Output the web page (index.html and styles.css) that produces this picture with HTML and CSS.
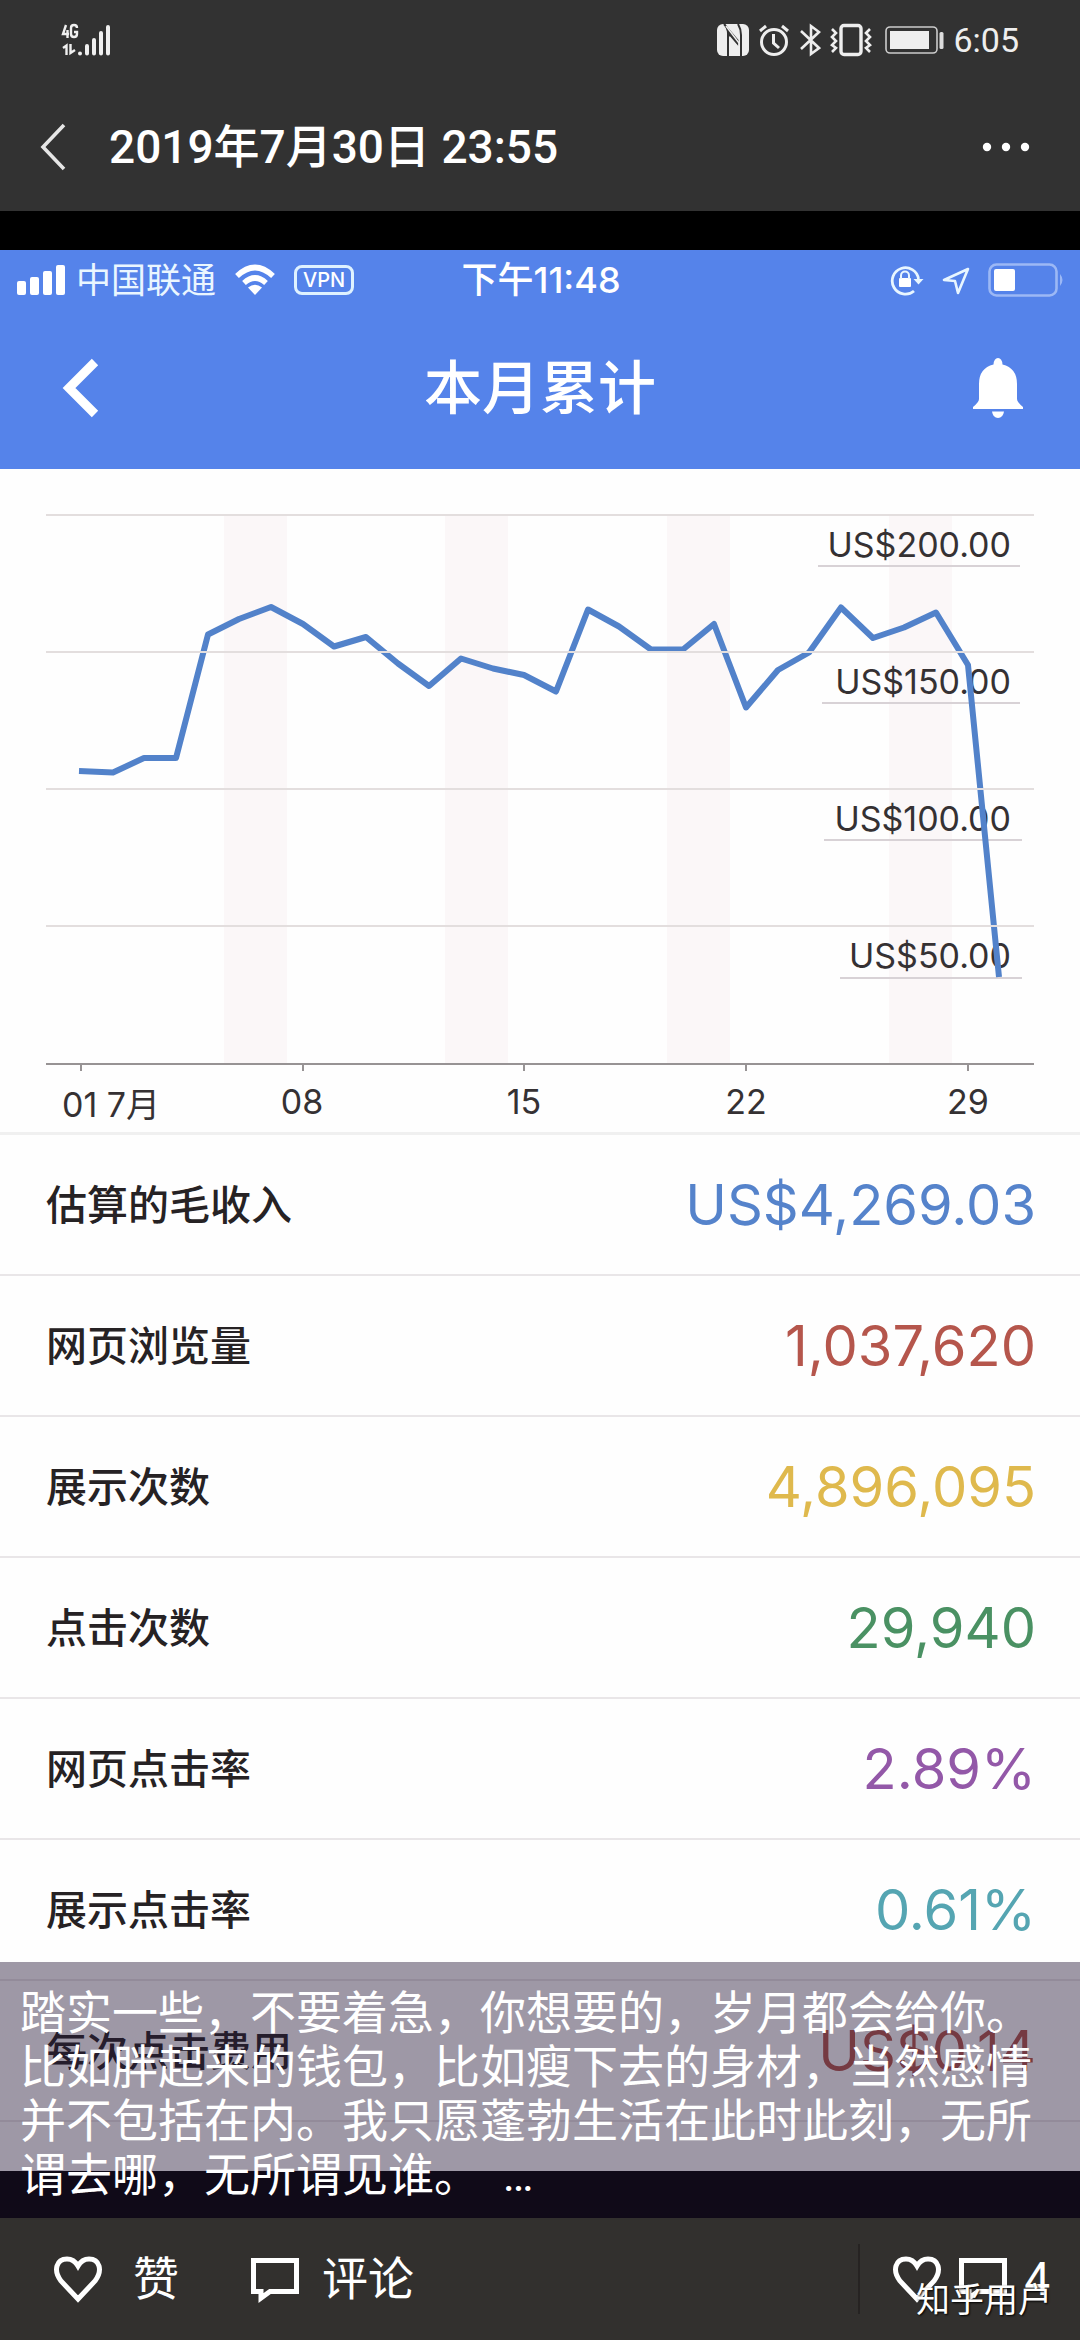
FILE: index.html
```html
<!DOCTYPE html>
<html lang="zh-CN">
<head>
<meta charset="utf-8">
<meta name="viewport" content="width=device-width, initial-scale=1">
<title>2019年7月30日 23:55</title>
<link rel="stylesheet" href="styles.css">
</head>
<body>
<div class="viewer">
  <header class="top">
    <div class="phone-status">
      <svg class="network" width="54" height="36" viewBox="0 0 54 36" fill="none" stroke="#f0f0f0" role="img" aria-label="4G">
        <g stroke-width="2.4"><path d="M6 3L3 12H9M7.500 8V16"/><path d="M17 6Q17 3 14 3T11 6V12Q11 15 14 15T17 12V10H14"/><path d="M3 26L6.500 23.500V33M10.500 22V31L15 28"/></g>
        <g stroke-width="4" stroke-linecap="round"><path d="M20 31.500V31.500M27 24V31.500M34 18V31.500M41 11V31.500M48 5V31.500"/></g>
      </svg>
      <div class="status-icons">
        <svg width="32" height="34" viewBox="0 0 32 34" role="img" aria-label="NFC">
          <rect y="1" width="32" height="32" rx="6" fill="#eee"/>
          <path d="M7 1Q11 5 11 10V33M21 1Q24 6 24 12V33" fill="none" stroke="#323232" stroke-width="2"/>
          <path d="M8 1L21.500 17V24L12 13V33H10V8Z" fill="#323232"/>
          <path d="M9 3L22 20V31L13.500 21V15L22 25" fill="none" stroke="#eee" stroke-width="1.500"/>
        </svg>
        <svg width="32" height="34" viewBox="0 0 32 34" fill="none" stroke="#eee" stroke-width="3" role="img" aria-label="闹钟">
          <circle cx="16" cy="19" r="12.500"/><path d="M15.500 11V20L21 25M2 8L8 3M30 8L24 3"/>
        </svg>
        <svg width="22" height="34" viewBox="0 0 22 34" fill="none" stroke="#eee" stroke-width="2.600" role="img" aria-label="蓝牙">
          <path d="M2 8L20 25L12 31V3L20 9L2 26"/>
        </svg>
        <svg width="42" height="34" viewBox="0 0 42 34" fill="none" stroke="#eee" stroke-width="3" role="img" aria-label="振动">
          <rect x="11" y="2.500" width="20" height="29" rx="3" stroke-width="3.400"/><path stroke-width="2.600" d="M2 6L6 10L2 14L6 18L2 22L6 25L2 29M40 6L36 10L40 14L36 18L40 22L36 25L40 29"/>
        </svg>
        <svg class="phone-battery" width="60" height="34" viewBox="0 0 60 34" role="img" aria-label="电量">
          <rect x="1" y="4" width="51" height="26" rx="4" fill="none" stroke="#ccc" stroke-width="1.600"/><rect x="5" y="8" width="39" height="18" fill="#eee"/><rect x="54.500" y="9" width="4" height="17" rx="1.500" fill="#ddd"/>
        </svg>
        <span class="clock">6:05</span>
      </div>
    </div>
    <div class="title-bar">
      <button class="plain back" aria-label="返回">
        <svg width="28" height="50" viewBox="0 0 28 50" fill="none" stroke="#e6e6e6" stroke-width="3.600"><path d="M25 3L4 25L25 47"/></svg>
      </button>
      <h1>2019年7月30日 23:55</h1>
      <button class="plain more" aria-label="更多">
        <svg width="48" height="10" viewBox="0 0 48 10" fill="#fff"><circle cx="5" cy="5" r="4.200"/><circle cx="24" cy="5" r="4.200"/><circle cx="43" cy="5" r="4.200"/></svg>
      </button>
    </div>
  </header>

  <main class="stage">
    <section class="report">
      <header class="app-head">
        <div class="app-status">
          <div class="carrier">
            <svg width="50" height="32" viewBox="0 0 50 32" fill="#fff" role="img" aria-label="信号"><rect x="1" y="17" width="9" height="14" rx="2"/><rect x="14" y="13" width="9" height="18" rx="2"/><rect x="27" y="7" width="9" height="24" rx="2"/><rect x="40" y="1" width="9" height="30" rx="2"/></svg>
            <span class="carrier-name">中国联通</span>
            <svg width="42" height="32" viewBox="0 0 42 32" role="img" aria-label="无线网络"><path d="M3 12Q21 -5 39 12M10 19Q21 9 32 19" fill="none" stroke="#fff" stroke-width="5.500"/><path d="M14 23.500Q21 18 28 23.500L21 31Z" fill="#fff"/></svg>
            <span class="vpn">VPN</span>
          </div>
          <span class="app-clock">下午11:48</span>
          <div class="app-icons">
            <svg width="34" height="32" viewBox="0 0 34 32" fill="none" stroke="#e8f6ff" role="img" aria-label="方向锁定"><path d="M24 27A13.200 13.200 0 1 1 28.500 15" stroke-width="2.800"/><path d="M23.500 15H33.500L28.500 20.500Z" fill="#e8f6ff" stroke="none"/><rect x="9" y="14" width="12" height="9" rx="1" fill="#fff" stroke="none"/><path d="M11 15V11.500A4 4 0 0 1 19 11.500V15" stroke-width="2"/></svg>
            <svg width="30" height="32" viewBox="0 0 30 32" fill="none" stroke="#e8f6ff" stroke-width="2.600" stroke-linejoin="round" role="img" aria-label="定位"><path d="M27 5L3 16L14 17L17 29Z"/></svg>
            <svg width="78" height="36" viewBox="0 0 78 36" role="img" aria-label="电池"><rect x="1.500" y="2.500" width="67" height="31" rx="7" fill="none" stroke="#9cb8f5" stroke-width="2.600"/><rect x="6" y="7" width="21" height="22" rx="2" fill="#fff"/><path d="M72 12Q77 18 72 24Z" fill="#9cb8f5"/></svg>
          </div>
        </div>
        <div class="app-title">
          <button class="plain app-back" aria-label="返回">
            <svg width="38" height="60" viewBox="0 0 38 60" fill="none" stroke="#fff" stroke-width="9"><path d="M33 4L7 30L33 56"/></svg>
          </button>
          <h2>本月累计</h2>
          <button class="plain app-bell" aria-label="通知">
            <svg width="52" height="62" viewBox="0 0 52 62" fill="#fff"><path d="M21.500 7.500Q22 1 26 1T30.500 7.500Q45 11 45 27V42Q45 45 51 50V52H1V50Q7 45 7 42V27Q7 11 21.500 7.500Z"/><path d="M20 54.500H32Q31 61 26 61T20 54.500Z"/></svg>
          </button>
        </div>
      </header>

      <div class="chart">
        <svg viewBox="0 0 1080 663" role="img" aria-label="本月每日收入">
          <g class="band"><rect x="224" y="46" width="63" height="549"/><rect x="445" y="46" width="63" height="549"/><rect x="667" y="46" width="63" height="549"/><rect x="889" y="46" width="63" height="549"/></g>
          <path class="rule" d="M46 46H1034"/>
          <g class="label" text-anchor="end"><text x="1011" y="88">US$200.00</text><text x="1011" y="225">US$150.00</text><text x="1011" y="362">US$100.00</text><text x="1011" y="499">US$50.00</text></g>
          <path class="underline" d="M818 97H1020M822 234H1020M824 371H1022M840 509H1022"/>
          <polyline class="trend" points="79,302 113,303.500 144,289 176,289 208,165.500 239,150 271,138 303,155 334,177.500 366,168 398,194.500 429,217 461,189.500 493,199.500 524,206 556,222.500 588,140.500 619,157.500 651,180.500 683,180.500 714,155 746,238.500 778,201 809,183.500 841,138.500 873,169 904,158.500 936,143.500 968,196 999,508"/>
          <path class="rule" d="M46 183H1034M46 320H1034M46 457H1034"/>
          <path class="axis" d="M46 595H1034M81 595V602M303 595V602M524 595V602M746 595V602M968 595V602"/>
          <g class="label"><text x="62" y="648">01 7月</text><g text-anchor="middle"><text x="302" y="645">08</text><text x="524" y="645">15</text><text x="746" y="645">22</text><text x="968" y="645">29</text></g></g>
        </svg>
      </div>

      <table class="metrics">
        <tbody>
          <tr><th scope="row">估算的毛收入</th><td class="blue">US$4,269.03</td></tr>
          <tr><th scope="row">网页浏览量</th><td class="red">1,037,620</td></tr>
          <tr><th scope="row">展示次数</th><td class="yellow">4,896,095</td></tr>
          <tr><th scope="row">点击次数</th><td class="green">29,940</td></tr>
          <tr><th scope="row">网页点击率</th><td class="purple">2.89%</td></tr>
          <tr><th scope="row">展示点击率</th><td class="teal">0.61%</td></tr>
          <tr><th scope="row">每次点击费用</th><td class="red">US$0.14</td></tr>
        </tbody>
      </table>
    </section>
    <p class="caption">踏实一些，不要着急，你想要的，岁月都会给你。比如胖起来的钱包，比如瘦下去的身材，当然感情并不包括在内。我只愿蓬勃生活在此时此刻，无所谓去哪，无所谓见谁。&nbsp; …</p>
  </main>

  <footer class="actions">
    <button class="plain action like">
      <svg width="50" height="48" viewBox="0 0 50 48"><path class="outline" d="M25 44L8 26Q2 18 4 11Q6 4 14 4Q21 4 25 11Q29 4 36 4Q44 4 46 11Q48 18 42 26Z"/></svg>
      <span>赞</span>
    </button>
    <button class="plain action comment">
      <svg width="50" height="48" viewBox="0 0 50 48"><path class="outline" d="M3.500 5.500H46.500V36.500H20L11 43V36.500H3.500Z"/></svg>
      <span>评论</span>
    </button>
    <button class="plain action detail" aria-label="查看详情">
      <svg width="50" height="48" viewBox="0 0 50 48"><path class="outline" d="M25 44L8 26Q2 18 4 11Q6 4 14 4Q21 4 25 11Q29 4 36 4Q44 4 46 11Q48 18 42 26Z"/></svg>
      <svg width="50" height="48" viewBox="0 0 50 48"><path class="outline" d="M3.500 5.500H46.500V36.500H20L11 43V36.500H3.500Z"/></svg>
      <span>4</span>
    </button>
    <span class="watermark">知乎用户</span>
  </footer>
</div>
</body>
</html>
```

FILE: styles.css
```css
* {
  box-sizing: border-box;
}

body {
  margin: 0;
  background: #32302e;
  color: #fff;
  font-family: Roboto, "Noto Sans CJK SC", sans-serif;
}

svg {
  display: block;
  flex: none;
}

h1,
h2,
p {
  margin: 0;
}

.plain {
  display: flex;
  align-items: center;
  padding: 0;
  border: 0;
  background: none;
  color: inherit;
  font: inherit;
}

.viewer {
  display: flex;
  flex-direction: column;
  min-height: 100vh;
}

/* Phone status bar and title */

.top {
  background: #323232;
}

.phone-status {
  display: flex;
  justify-content: space-between;
  align-items: center;
  height: 84px;
  padding: 0 61px 4px 60px;
}

.status-icons {
  display: flex;
  align-items: center;
  gap: 9px;
}

.phone-battery {
  margin-left: 4px;
}

.clock {
  margin-left: -1px;
  color: #eee;
  font-size: 34px;
  line-height: 40px;
}

.title-bar {
  display: flex;
  align-items: center;
  height: 127px;
  padding: 0 50px 2px 39px;
}

.title-bar h1 {
  flex: 1;
  margin-left: 42px;
  font-size: 46px;
  line-height: 64px;
  font-weight: 500;
}

/* Photo area */

.stage {
  position: relative;
  padding: 39px 0 47px;
  background: #000;
}

.report {
  padding-bottom: 49px;
  background: #fefefe;
  color: #262224;
  font-family: Inter, "Noto Sans CJK SC", sans-serif;
}

.app-head {
  height: 219px;
  background: #5583ea;
  color: #fff;
}

.app-status {
  display: grid;
  grid-template-columns: 1fr auto 1fr;
  align-items: center;
  height: 60px;
  padding: 0 14px 0 16px;
}

.carrier,
.app-icons {
  display: flex;
  align-items: center;
}

.carrier-name {
  margin: 0 18px 0 10px;
  color: #eaf6ff;
  font-size: 35px;
  line-height: 40px;
}

.vpn {
  margin-left: 18px;
  padding: 0 6px;
  border: 3px solid #dff2ff;
  border-radius: 8px;
  font-size: 20px;
  line-height: 24px;
  font-weight: 500;
}

.app-clock {
  font-size: 36px;
  line-height: 40px;
  font-weight: 500;
}

.app-icons {
  justify-content: flex-end;
  gap: 17px;
}

.app-title {
  display: grid;
  grid-template-columns: 1fr auto 1fr;
  align-items: center;
  height: 156px;
  padding: 0 56px;
}

.app-title h2 {
  font-size: 58px;
  line-height: 80px;
  font-weight: 500;
}

.app-back {
  margin-left: 6px;
}

.app-bell {
  justify-self: end;
}

/* Daily revenue chart */

.chart {
  border-bottom: 3px solid #f0f0f0;
}

.chart svg {
  width: 100%;
  height: auto;
}

.band {
  fill: #fbf7f8;
}

.rule {
  fill: none;
  stroke: #e3dede;
  stroke-width: 2;
}

.underline {
  fill: none;
  stroke: #d8d2d6;
  stroke-width: 2;
}

.axis {
  fill: none;
  stroke: #979394;
  stroke-width: 2;
}

.trend {
  fill: none;
  stroke: #5282ca;
  stroke-width: 6;
  stroke-linejoin: round;
}

.label {
  fill: #353133;
  font-size: 34px;
}

/* Totals */

.metrics {
  width: 100%;
  border-spacing: 0;
}

.metrics th,
.metrics td {
  height: 141px;
  padding: 0 44px 0 46px;
  border-bottom: 2px solid #e9e6e8;
}

.metrics th {
  font-size: 41px;
  line-height: 60px;
  font-weight: 500;
  text-align: left;
}

.metrics td {
  font-size: 56px;
  line-height: 68px;
  text-align: right;
}

.blue { color: #5583cb; }
.red { color: #b5564c; }
.yellow { color: #dfb94d; }
.green { color: #4a9163; }
.purple { color: #9358a8; }
.teal { color: #55a5b2; }

.caption {
  position: absolute;
  right: 0;
  bottom: 0;
  left: 0;
  padding: 24px 20px 16px;
  background: rgba(36, 23, 54, 0.44);
  font-size: 46px;
  line-height: 54px;
}

/* Bottom actions */

.actions {
  position: relative;
  display: flex;
  flex: 1;
  align-items: center;
  min-height: 122px;
  padding: 0 30px 0 53px;
  font-size: 46px;
  line-height: 64px;
}

.outline {
  fill: none;
  stroke: #fff;
  stroke-width: 5;
}

.like {
  gap: 30px;
}

.comment {
  margin-left: 71px;
  gap: 22px;
}

.detail {
  height: 70px;
  margin-left: auto;
  padding-left: 32px;
  border-left: 2px solid #262322;
  gap: 16px;
}

.watermark {
  position: absolute;
  right: 28px;
  bottom: 16px;
  font-size: 34px;
  line-height: 48px;
  text-shadow: 1px 1px 2px #000;
}
```
